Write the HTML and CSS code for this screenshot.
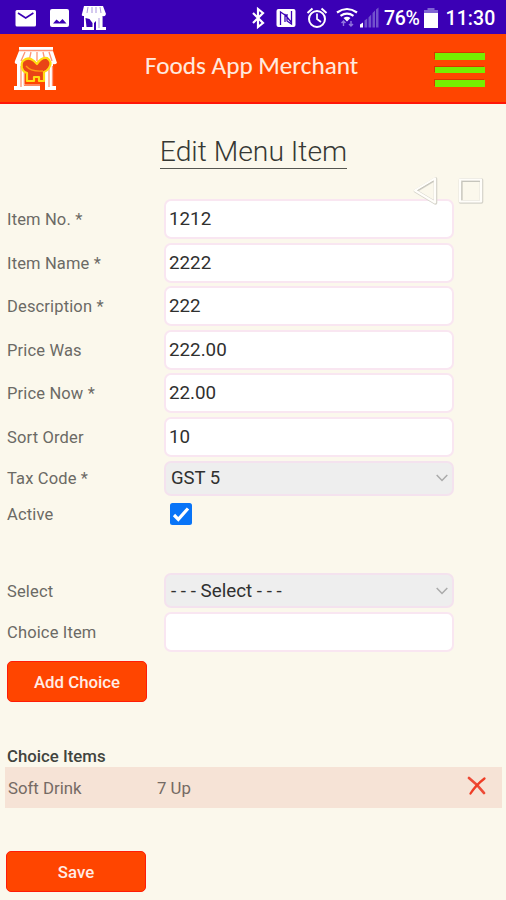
FILE: index.html
```
<!DOCTYPE html>
<html lang="en">
<head>
<meta charset="utf-8">
<title>Foods App Merchant</title>
<link rel="stylesheet" href="styles.css">
</head>
<body>
<div class="status">
  <svg class="status-left" width="110" height="34" viewBox="0 0 110 34">
    <rect x="15.500" y="10" width="20.500" height="16.500" rx="1.500" fill="#fff"/>
    <path d="M18 13l7.700 5 7.700-5" fill="none" stroke="#3b00b5" stroke-width="1.600"/>
    <rect x="50" y="9" width="19" height="18" rx="2" fill="#fff"/>
    <path d="M53 23.500l3.500-4 3 2.500 3-3 4 4.500z" fill="#3b00b5"/>
    <path d="M84 6h19l3 8q-1 3-3 2v11h3v3H82v-3h2V16q-3 0-2-2z" fill="#fff"/>
    <path d="M88 7l-1 6M92 7v6M96 7v6M100 7l1 6M99 18v10M102.500 16v11" fill="none" stroke="#a994df" stroke-width="1"/>
    <path d="M85.500 18l4 1 3 4v4h-6zM96 21v9h-2v-7z" fill="#3b00b5"/>
  </svg>
  <svg class="status-right" width="136" height="34" viewBox="246 0 136 34">
    <path d="M253 13l10 10-5 4V9l5 4-10 10" fill="none" stroke="#fff" stroke-width="2.200"/>
    <rect x="276.500" y="9" width="19" height="18" rx="2" fill="#fff"/>
    <path d="M280.500 25V12l4.500 3v7m2-8v7l4.500 3V11M284.500 14l7 8.500" fill="none" stroke="#3b00b5" stroke-width="1.300"/>
    <g fill="none" stroke="#fff" stroke-width="2">
      <circle cx="317" cy="19" r="8"/>
      <path d="M317 13.500V19l4 3" stroke-width="1.700"/>
      <path d="M307.500 13l5-4.500M326.500 13l-5-4.500"/>
      <path d="M337 12.500q10-7 20 0M340.500 15.800q6.500-4.500 13 0" stroke-width="2.200"/>
    </g>
    <path d="M343.500 18q3.500-2.400 7 0L347 21.500z" fill="#fff"/>
    <path d="M343.500 26v-5m-2 2l2-2 2 2M351 21v5m-2-2l2 2 2-2" fill="none" stroke="#9175de" stroke-width="1.400"/>
    <path d="M360 27.500v-3l3-2v5z" fill="#fff"/>
    <path d="M364.500 27.500v-7l2.700-2v9zM368.500 27.500v-10l2.700-3v13zM372.500 27.500V13l2.500-2.500v17zM376 27.500v-18l2.500-2v20z" fill="#7251cd"/>
  </svg>
  <span class="percent">76%</span>
  <svg class="battery" width="14" height="20" viewBox="0 0 14 20"><path d="M3.500 0h7v2H14v4H0V2h3.500z" fill="#8065d4"/><path d="M0 5h14v15H0z" fill="#fff"/></svg>
  <span class="clock">11:30</span>
</div>
<header class="bar">
  <svg class="logo" width="44" height="46" viewBox="0 0 44 46">
    <path d="M5 1h34v3H5zM5 5h34l4 12q-2 2-4 1v22h3v4H31V25H11v15h15v4H0v-4h3V18q-3 0-2-3z" fill="#fff"/>
    <path d="M5 4.500h34M11 6L7 15M17 6l-2 9M23 6v9M29 6l2 9M35 6l3 9M7 20v21M35 21v20M38.500 20v20" fill="none" stroke="#ff9575" stroke-width="1.300"/>
    <path d="M10 25h20v15H10z" fill="#ff4500"/>
    <path d="M10 26v13h16" fill="none" stroke="#ffc8b6" stroke-width="1.200"/>
    <path d="M9 15q5-5 11 0l3 3q4-7 10-6 6 4 2 10-2 3-5 4v9h-5v-4h-5v4h-7v-8q-4-1-5-5-1-5 1-7z" fill="#e94516" stroke="#ffdc12" stroke-width="2.200" stroke-linejoin="round"/>
    <path d="M12 20q5 6 17 5" stroke="#ff9813" stroke-width="1.300" fill="none"/>
  </svg>
  <h1 class="brand">Foods App Merchant</h1>
  <div class="menu"><i></i><i></i><i></i></div>
</header>
<main>
  <h2 class="heading"><span>Edit Menu Item</span></h2>
  <svg class="nav-keys" width="76" height="34" viewBox="0 0 76 34">
    <g fill="none" stroke-linejoin="round">
      <path d="M4.500 18L24.500 6v24zM49.500 7h21v22h-21z" stroke="#d5d3ca" stroke-width="3.600"/>
      <path d="M4 17.500L24 5.500v24zM49 6.500h21v22H49z" stroke="#fffefa" stroke-width="2.200"/>
      <path d="M6.500 17.500L22.500 8M51 27V8.500h18" stroke="#c6c5bc" stroke-width="1"/>
    </g>
  </svg>
  <div class="form">
    <div class="row"><label>Item No. *</label><div class="field">1212</div></div>
    <div class="row"><label>Item Name *</label><div class="field">2222</div></div>
    <div class="row"><label>Description *</label><div class="field">222</div></div>
    <div class="row"><label>Price Was</label><div class="field">222.00</div></div>
    <div class="row"><label>Price Now *</label><div class="field">22.00</div></div>
    <div class="row"><label>Sort Order</label><div class="field">10</div></div>
    <div class="row"><label>Tax Code *</label><div class="field select"><span>GST 5</span><svg width="12" height="8" viewBox="0 0 12 8"><path d="M.7 1l5.300 5.500L11.300 1"/></svg></div></div>
    <div class="row active"><label>Active</label><svg class="check" width="22" height="22" viewBox="0 0 22 22"><rect width="22" height="22" rx="2.500" fill="#0874f7"/><path d="M4 12l4.300 4.300L18 5.500" fill="none" stroke="#fff" stroke-width="3.200"/></svg></div>
  </div>
  <div class="form choice">
    <div class="row"><label>Select</label><div class="field select"><span class="ph">- - - Select - - -</span><svg width="12" height="8" viewBox="0 0 12 8"><path d="M.7 1l5.300 5.500L11.300 1"/></svg></div></div>
    <div class="row"><label>Choice Item</label><div class="field"></div></div>
  </div>
  <div class="button add">Add Choice</div>
  <h3 class="subhead">Choice Items</h3>
  <div class="item"><span class="kind">Soft Drink</span><span class="name">7 Up</span>
    <svg width="20" height="20" viewBox="0 0 20 20"><path d="M2 2q8 6 15 15" stroke="#ed4b37" stroke-width="2.800" stroke-linecap="round" fill="none"/><path d="M17.500 2.500Q9 9 3.500 17.500" stroke="#ef3c25" stroke-width="2.300" stroke-linecap="round" fill="none"/></svg>
  </div>
  <div class="button save">Save</div>
</main>
</body>
</html>
```
FILE: styles.css
```
* { box-sizing: border-box; }
body {
  margin: 0;
  height: 900px;
  overflow: hidden;
  background: #fbf8ec;
  color: #6b6a65;
  font: 16px/20px Roboto, "Liberation Sans", sans-serif;
}
svg { display: block; flex: none; }
.status {
  display: flex;
  align-items: center;
  height: 34px;
  background: #3b00b5;
  color: #fff;
  white-space: nowrap;
}
.status-right { margin-left: 136px; }
.percent { width: 37px; margin-left: 2px; font-size: 19.5px; font-weight: 500; padding-top: 3px; letter-spacing: -.3px; }
.battery { margin: 2px 0 0 3px; }
.clock { margin-left: 7.5px; padding-top: 3px; font-size: 19.5px; font-weight: 500; letter-spacing: .1px; }
.bar {
  display: flex;
  height: 70px;
  padding-left: 14px;
  background: #ff4500;
  border-bottom: 2px solid #ff1708;
}
.logo { margin-top: 12px; }
.brand {
  width: 216px;
  margin: 18px 0 0 87px;
  color: #ffe9df;
  font: 500 25.2px/28px Carlito, "Open Sans", sans-serif;
  -webkit-text-stroke: .1px #ffe9df;
  white-space: nowrap;
}
.menu {
  display: flex;
  flex-direction: column;
  gap: 7px;
  margin: 19px 0 0 74px;
}
.menu i {
  width: 50px;
  height: 6.500px;
  background: #76ef00;
  box-shadow: -1px -1px 0 #d93500;
}
main { position: relative; }
.heading {
  display: flex;
  justify-content: center;
  margin: 0;
  padding: 32px 0 30px 1px;
  color: #363834;
  font-size: 28.3px;
  font-weight: 300;
  line-height: 32px;
}
.heading span { border-bottom: 1.500px solid #555650; white-space: nowrap; }
.nav-keys { position: absolute; left: 411px; top: 69px; }
.form { display: flex; flex-direction: column; gap: 3.600px; padding-left: 7px; }
.row { display: flex; align-items: center; }
.row label { width: 157px; padding-top: 2px; font-size: 16.5px; letter-spacing: .15px; }
.field {
  display: flex;
  align-items: center;
  width: 290px;
  height: 40px;
  padding: 0 3px;
  border: 2px solid #f9e6f1;
  border-radius: 7px;
  background: #fff;
  color: #30302f;
  font-size: 18.8px;
}
.select { justify-content: space-between; height: 35px; padding: 0 4px 0 5px; border-color: #f4e2ee; background: #eee; font-size: 18.500px; }
.ph { font-size: 18.8px; }
.select path { fill: none; stroke: #aaa; stroke-width: 1.500; }
.check { margin-left: 6px; }
.active { margin-top: 4px; }
.choice { margin-top: 48px; }
.button {
  width: 140px;
  height: 41px;
  border: 1px solid #ff1c08;
  border-radius: 5px;
  background: #ff4500;
  color: #ffece6;
  font-size: 16.8px;
  font-weight: 500;
  line-height: 40px;
  text-align: center;
}
.add { margin: 9px 0 0 7px; }
.subhead { margin: 44px 0 0 7px; color: #41443e; font-size: 16.800px; font-weight: 500; line-height: 20px; }
.item {
  display: flex;
  align-items: center;
  height: 41px;
  margin: 1px 4px 0 5px;
  padding: 0 15px 0 3px;
  background: #f6e3d6;
  color: #756a64;
  font-size: 16.800px;
}
.item span { padding-top: 1px; }
.kind { width: 149px; }
.name { flex: 1; }
.item svg { margin-bottom: 3px; }
.save { margin: 43px 0 0 6px; }
```
